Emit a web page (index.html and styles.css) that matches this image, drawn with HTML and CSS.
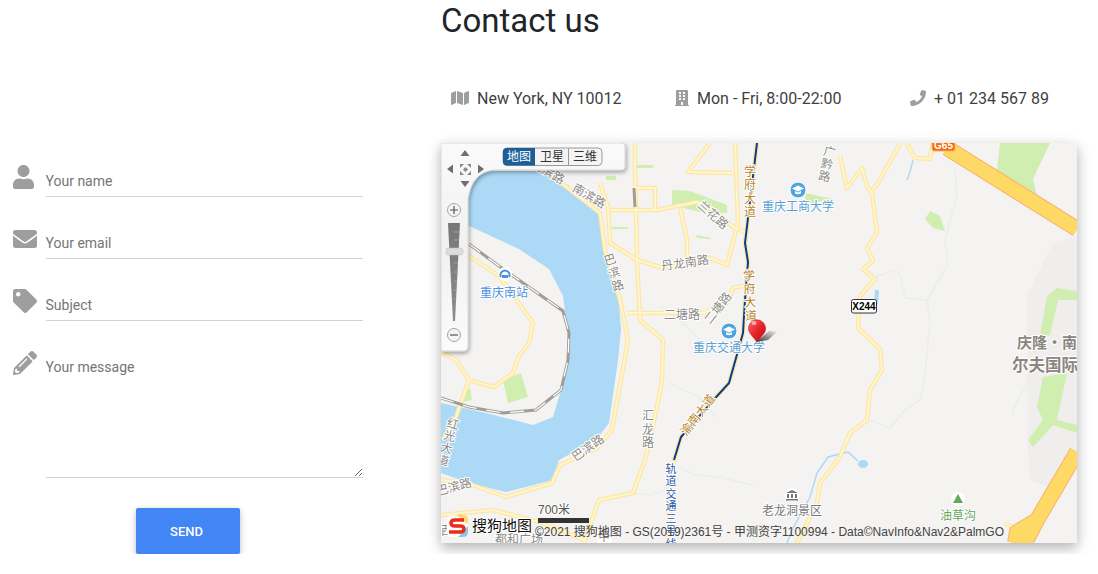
FILE: index.html
```html
<!DOCTYPE html>
<html lang="en">
<head>
    <meta charset="UTF-8">
    <meta name="viewport" content="width=device-width, initial-scale=1.0">
    <title>Contact us</title>
    <link rel="stylesheet" href="styles.css">
</head>
<body>
    <div class="page">
        <form class="contact-form">
            <div class="field">
                <svg class="field-icon" viewBox="0 0 448 512" preserveAspectRatio="xMinYMid"><path d="M224 256c70.7 0 128-57.3 128-128S294.7 0 224 0 96 57.3 96 128s57.3 128 128 128zm89.6 32h-16.7c-22.2 10.2-46.9 16-72.9 16s-50.6-5.8-72.9-16h-16.7C60.2 288 0 348.2 0 422.4V464c0 26.5 21.5 48 48 48h352c26.5 0 48-21.5 48-48v-41.6c0-74.2-60.2-134.4-134.4-134.4z"/></svg>
                <input type="text" placeholder="Your name">
            </div>
            <div class="field">
                <svg class="field-icon" viewBox="0 0 512 512"><path d="M502.3 190.8c3.9-3.1 9.7-.2 9.7 4.7V400c0 26.5-21.5 48-48 48H48c-26.5 0-48-21.5-48-48V195.6c0-5 5.7-7.8 9.7-4.7 22.4 17.4 52.1 39.5 154.1 113.6 21.1 15.4 56.7 47.8 92.2 47.6 35.7.3 72-32.8 92.3-47.6 102-74.1 131.6-96.3 154-113.7zM256 320c23.2.4 56.6-29.2 73.4-41.4 132.7-96.3 142.8-104.7 173.4-128.7 5.8-4.5 9.2-11.5 9.2-18.9v-19c0-26.5-21.5-48-48-48H48C21.5 64 0 85.5 0 112v19c0 7.4 3.4 14.3 9.2 18.9 30.6 23.9 40.7 32.4 173.4 128.7 16.8 12.2 50.2 41.8 73.4 41.4z"/></svg>
                <input type="email" placeholder="Your email">
            </div>
            <div class="field">
                <svg class="field-icon" viewBox="0 0 512 512"><path d="M0 252.118V48C0 21.49 21.49 0 48 0h204.118a48 48 0 0 1 33.941 14.059l211.882 211.882c18.745 18.745 18.745 49.137 0 67.882L293.823 497.941c-18.745 18.745-49.137 18.745-67.882 0L14.059 286.059A48 48 0 0 1 0 252.118zM112 64c-26.51 0-48 21.49-48 48s21.49 48 48 48 48-21.49 48-48-21.49-48-48-48z"/></svg>
                <input type="text" placeholder="Subject">
            </div>
            <div class="field field-message">
                <svg class="field-icon" viewBox="0 0 512 512"><path d="M497.9 142.1l-46.1 46.1c-4.7 4.7-12.3 4.7-17 0l-111-111c-4.7-4.7-4.7-12.3 0-17l46.1-46.1c18.7-18.7 49.1-18.7 67.9 0l60.1 60.1c18.8 18.7 18.8 49.1 0 67.9zM284.2 99.8L21.6 362.4.4 483.9c-2.9 16.4 11.4 30.6 27.8 27.8l121.5-21.3 262.6-262.6c4.7-4.7 4.7-12.3 0-17l-111-111c-4.8-4.7-12.4-4.7-17.1 0zM124.1 339.9c-5.5-5.5-5.5-14.3 0-19.8l154-154c5.5-5.5 14.3-5.5 19.8 0s5.5 14.3 0 19.8l-154 154c-5.5 5.5-14.3 5.5-19.8 0zM88 424h48v36.3l-64.5 11.3-31.1-31.1L51.7 376H88v48z"/></svg>
                <textarea placeholder="Your message"></textarea>
            </div>
            <button type="button" class="send-btn">SEND</button>
        </form>

        <section class="contact-info">
            <h2>Contact us</h2>
            <div class="info-row">
                <div class="info-item">
                    <svg class="info-icon" viewBox="0 0 576 512"><path d="M0 117.66v346.32c0 11.32 11.43 19.06 21.94 14.86L160 416V32L20.12 87.95A32.006 32.006 0 0 0 0 117.66zM192 416l192 64V96L192 32v384zM554.06 33.16L416 96v384l139.88-55.95A31.996 31.996 0 0 0 576 394.34V48.02c0-11.32-11.43-19.06-21.94-14.86z"/></svg>
                    <span>New York, NY 10012</span>
                </div>
                <div class="info-item">
                    <svg class="info-icon" viewBox="0 0 448 512"><path d="M436 480h-20V24c0-13.255-10.745-24-24-24H56C42.745 0 32 10.745 32 24v456H12c-6.627 0-12 5.373-12 12v20h448v-20c0-6.627-5.373-12-12-12zM128 76c0-6.627 5.373-12 12-12h40c6.627 0 12 5.373 12 12v40c0 6.627-5.373 12-12 12h-40c-6.627 0-12-5.373-12-12V76zm0 96c0-6.627 5.373-12 12-12h40c6.627 0 12 5.373 12 12v40c0 6.627-5.373 12-12 12h-40c-6.627 0-12-5.373-12-12v-40zm52 148h-40c-6.627 0-12-5.373-12-12v-40c0-6.627 5.373-12 12-12h40c6.627 0 12 5.373 12 12v40c0 6.627-5.373 12-12 12zm76 160h-64v-84c0-6.627 5.373-12 12-12h40c6.627 0 12 5.373 12 12v84zm64-172c0 6.627-5.373 12-12 12h-40c-6.627 0-12-5.373-12-12v-40c0-6.627 5.373-12 12-12h40c6.627 0 12 5.373 12 12v40zm0-96c0 6.627-5.373 12-12 12h-40c-6.627 0-12-5.373-12-12v-40c0-6.627 5.373-12 12-12h40c6.627 0 12 5.373 12 12v40zm0-96c0 6.627-5.373 12-12 12h-40c-6.627 0-12-5.373-12-12V76c0-6.627 5.373-12 12-12h40c6.627 0 12 5.373 12 12v40z"/></svg>
                    <span>Mon - Fri, 8:00-22:00</span>
                </div>
                <div class="info-item">
                    <svg class="info-icon" viewBox="0 0 512 512"><path d="M493.4 24.6l-104-24c-11.3-2.6-22.9 3.3-27.5 13.9l-48 112c-4.2 9.8-1.4 21.3 6.9 28l60.6 49.6c-36 76.7-98.9 140.5-177.2 177.2l-49.6-60.6c-6.8-8.3-18.2-11.1-28-6.9l-112 48C3.9 366.5-2 378.1.6 389.4l24 104C27.1 504.2 36.7 512 48 512c256.1 0 464-207.5 464-464 0-11.2-7.7-20.9-18.6-23.4z"/></svg>
                    <span>+ 01 234 567 89</span>
                </div>
            </div>

            <div class="map">
                <!-- viewBox uses page coordinates so the map features are easy to line up -->
                <svg class="map-canvas" viewBox="441 143 636 400">
                    <defs>
                        <linearGradient id="panelFill" x1="0" y1="0" x2="0" y2="1">
                            <stop offset="0" stop-color="#fafafa"/>
                            <stop offset="0.5" stop-color="#f1f1f1"/>
                            <stop offset="1" stop-color="#fbfbfb"/>
                        </linearGradient>
                        <linearGradient id="sliderFill" x1="0" y1="0" x2="0" y2="1">
                            <stop offset="0" stop-color="#777"/>
                            <stop offset="1" stop-color="#8b8b8b"/>
                        </linearGradient>
                        <linearGradient id="pinFill" x1="0" y1="0" x2="1" y2="1">
                            <stop offset="0" stop-color="#ff6a6a"/>
                            <stop offset="0.5" stop-color="#e8232b"/>
                            <stop offset="1" stop-color="#b30f1a"/>
                        </linearGradient>
                        <linearGradient id="pinShadow" x1="0" y1="1" x2="1" y2="0">
                            <stop offset="0" stop-color="#333"/>
                            <stop offset="1" stop-color="#333" stop-opacity="0"/>
                        </linearGradient>
                        <filter id="panelShadow" x="-20%" y="-20%" width="140%" height="140%">
                            <feDropShadow dx="1" dy="2" stdDeviation="2" flood-color="#000" flood-opacity="0.35"/>
                        </filter>
                        <g id="roadLines">
                            <path d="M635 143 L635 173 L636 207 L637 260 L640 320 L663 340 L662 380 L659 397 L646 457 L633 493 L599 500 L586 537 L584 543"/>
                            <path d="M600 183 L608 207 L610 243 L637 260 L663 268 L687 263 L710 258 L727 265 L738 223 L735 143"/>
                            <path d="M610 210 L657 210 L697 202 L710 207 L733 227 L747 233"/>
                            <path d="M680 208 L687 240 L687 265"/>
                            <path d="M710 143 L688 172 L733 173"/>
                            <path d="M633 188 L655 188 L655 210"/>
                            <path d="M627 313 L703 313 L727 303 L733 288 L748 285"/>
                            <path d="M546 171 L600 213 L605 250 L620 300 L628 340 L621 380 L612 430 L597 448 L560 465 L552 483 L506 497 L470 484 L441 480"/>
                            <path d="M469 256 L499 276 L533 323 L529 343 L519 356 L513 373 L494 387 L479 383 L469 380 L456 417 L443 440"/>
                            <path d="M441 352 L456 360 L469 380"/>
                            <path d="M840 156 L847 188 L862 168 L867 186 L872 193 L877 233 L867 248 L873 261 L863 269 L875 279 L860 296 L858 328 L880 349 L882 370 L870 390 L867 420 L850 433 L840 457 L820 483 L817 503 L797 543"/>
                            <path d="M872 191 L878 183 L897 149 L900 143"/>
                            <path d="M907 144 L915 158 L930 159 L933 143"/>
                            <path d="M441 515 L493 510 L543 523 L586 541"/>
                            <path d="M1005 523 L1017 530"/>
                            <path d="M757 143 L745 243 L748 262 L745 300 L743 333 L729 383 L718 395 L681 437 L674 460 L670 480 L668 543"/>
                        </g>
                    </defs>

                    <rect class="map-ground" x="441" y="143" width="636" height="400"/>

                    <!-- grey-pink area and parks -->
                    <path class="map-area" d="M1027 296 L1053 243 L1077 236 L1077 462 L1047 487 L1030 480 L1028 450 Z"/>
                    <path class="map-park" d="M1000 143 L1050 143 L1033 179 L1037 196 L997 171 Z"/>
                    <path class="map-park" d="M925 219 L930 211 L940 216 L945 231 L933 228 Z"/>
                    <path class="map-park" d="M1040 336 L1047 296 L1057 288 L1077 291 L1077 300 L1058 300 L1050 335 Z"/>
                    <path class="map-park" d="M1043 377 L1067 373 L1057 420 L1077 425 L1077 433 L1053 425 L1033 447 L1028 440 L1043 420 L1037 407 Z"/>
                    <path class="map-park" d="M672 190 L690 191 L727 205 L727 213 L700 212 L672 205 Z"/>
                    <path class="map-park" d="M503 380 L521 373 L528 397 L508 403 Z"/>
                    <path class="map-park" d="M462 392 L470 388 L472 400 L463 402 Z"/>
                    <path class="map-park" d="M635 165 L653 165 L653 168 L635 168 Z"/>
                    <path class="map-park" d="M696 235 L711 238 L710 239 L697 238 Z"/>
                    <path class="map-park" d="M612 227 L628 227 L628 229 L612 229 Z"/>
                    <path class="map-park" d="M606 176 L616 176 L616 180 L606 180 Z"/>
                    <path class="map-park" d="M805 193 L833 199 L806 204 Z"/>

                    <!-- water -->
                    <path class="map-water" d="M441 143 L494 171 L546 171 L569 186 L583 201 L601 214 L604 236 L606 259 L618 293 L621 329 L618 360 L609 423 L596 440 L559 460 L553 480 L506 492 L469 483 L441 473 L441 403 L486 413 L533 425 L553 417 L564 380 L568 360 L568 333 L563 296 L549 269 L519 249 L469 226 L441 215 Z"/>
                    <path class="map-stream" d="M913 160 L910 172 L907 180"/>
                    <path class="map-stream" d="M848 452 L828 457 L817 473 L810 497 L792 530 L787 543"/>
                    <path class="map-stream" d="M848 452 L858 461"/>
                    <ellipse class="map-water" cx="863" cy="464" rx="5" ry="4"/>
                    <path class="map-stream-wide" d="M877 290 L876 304"/>

                    <!-- thin paths -->
                    <path class="map-path" d="M955 170 L957 195 L945 240 L948 265 L927 300 L905 298 L900 275 L895 270 L875 277"/>
                    <path class="map-path" d="M927 300 L930 320 L925 376"/>
                    <path class="map-path" d="M870 420 L890 428 L905 410 L920 400 L925 376"/>
                    <path class="map-path" d="M1030 380 L1015 405 L1012 415"/>
                    <path class="map-path" d="M669 383 L699 397 L716 417"/>
                    <path class="map-path" d="M679 467 L695 475 L719 477 L753 485"/>
                    <path class="map-path" d="M633 493 L650 495 L668 490"/>
                    <path class="map-path" d="M660 305 L680 320 L700 340"/>

                    <!-- roads -->
                    <use href="#roadLines" class="road-casing"/>
                    <use href="#roadLines" class="road-fill"/>
                    <path class="rail-line" d="M757 143 L745 243 L748 262 L745 300 L743 333 L729 383 L718 395 L681 437 L674 460"/>

                    <path class="highway-casing" d="M947 148 L1077 229"/>
                    <path class="highway-casing" d="M1077 452 L1037 520 L1017 532 L1015 543"/>
                    <path class="highway-casing" d="M1037 520 L1025 543"/>
                    <path class="highway" d="M947 148 L1077 229"/>
                    <path class="highway" d="M1077 452 L1037 520 L1017 532 L1015 543"/>
                    <path class="highway" d="M1037 520 L1025 543"/>

                    <path class="rail-grey" d="M469 244 L499 266 L563 311 L569 333 L568 360 L561 390 L536 410 L503 413 L469 407 L441 398"/>
                    <path class="rail-dash" d="M469 244 L499 266 L563 311 L569 333 L568 360 L561 390 L536 410 L503 413 L469 407 L441 398"/>
                    <path class="rail-grey" d="M634 188 L635 207"/>

                    <!-- road names -->
                    <text class="lbl-road" x="548" y="176" text-anchor="middle" transform="rotate(30 548 172)">南滨路</text>
                    <text class="lbl-road" x="589" y="200" text-anchor="middle" transform="rotate(30 589 196)">南滨路</text>
                    <text class="lbl-road lbl-vertical" x="614" y="273" text-anchor="middle" transform="rotate(-17 614 273)">巴滨路</text>
                    <text class="lbl-road" x="713" y="219" text-anchor="middle" transform="rotate(42 713 215)">兰花路</text>
                    <text class="lbl-road" x="685" y="267" text-anchor="middle" transform="rotate(-8 685 263)">丹龙南路</text>
                    <text class="lbl-road" x="682" y="319" text-anchor="middle">二塘路</text>
                    <text class="lbl-road" x="718" y="312" text-anchor="middle" transform="rotate(-52 718 308)">二塘路</text>
                    <text class="lbl-road lbl-vertical lbl-tight" x="827" y="164" text-anchor="middle" transform="rotate(12 827 164)">广黔路</text>
                    <text class="lbl-road lbl-vertical" x="648" y="430" text-anchor="middle">汇龙路</text>
                    <text class="lbl-road" x="588" y="452" text-anchor="middle" transform="rotate(-35 588 448)">巴滨路</text>
                    <text class="lbl-road" x="454" y="491" text-anchor="middle" transform="rotate(-15 454 487)">巴滨路</text>
                    <text class="lbl-road lbl-vertical lbl-tight" x="448" y="442" text-anchor="middle" transform="rotate(15 448 442)">红光大道</text>
                    <text class="lbl-road" x="519" y="544" text-anchor="middle">都和广场</text>
                    <text class="lbl-road" x="447" y="535" text-anchor="middle">西</text>
                    <rect class="map-chip" x="597" y="530" width="15" height="13"/>
                    <text class="lbl-road" x="604" y="541" text-anchor="middle">甲</text>

                    <text class="lbl-trunk lbl-vertical" x="750" y="192" text-anchor="middle">学府大道</text>
                    <text class="lbl-trunk lbl-vertical" x="750" y="296" text-anchor="middle" transform="rotate(-3 750 296)">学府大道</text>
                    <text class="lbl-trunk" x="698" y="419" text-anchor="middle" transform="rotate(-52 698 415)">渝南大道</text>
                    <text class="lbl-rail lbl-vertical" x="671" y="507" text-anchor="middle">轨道交通三号线</text>

                    <!-- poi -->
                    <circle class="poi-halo" cx="505" cy="274" r="7"/>
                    <path class="poi-station" d="M501 277 A4.500 4.500 0 1 1 509 277"/>
                    <rect class="poi-station-bar" x="502" y="275" width="6" height="3"/>
                    <text class="lbl-station" x="504" y="297" text-anchor="middle">重庆南站</text>

                    <circle class="poi-school" cx="798" cy="190" r="8"/>
                    <path class="poi-cap" d="M798 185.500 L804 188.500 L798 191.500 L792 188.500 Z M795 191 L795 193.500 Q798 195 801 193.500 L801 191 L798 192.500 Z"/>
                    <text class="lbl-school" x="798" y="211" text-anchor="middle">重庆工商大学</text>

                    <circle class="poi-school" cx="729" cy="331" r="8"/>
                    <path class="poi-cap" d="M729 326.500 L735 329.500 L729 332.500 L723 329.500 Z M726 332 L726 334.500 Q729 336 732 334.500 L732 332 L729 333.500 Z"/>
                    <text class="lbl-school" x="729" y="352" text-anchor="middle">重庆交通大学</text>

                    <circle class="poi-halo" cx="792" cy="495" r="7"/>
                    <path class="poi-museum" d="M792 490 L798 493 L786 493 Z M787 494 H789 V498 H787 Z M791 494 H793 V498 H791 Z M795 494 H797 V498 H795 Z M786 499 H798 V500.500 H786 Z"/>
                    <text class="lbl-scenic" x="792" y="515" text-anchor="middle">老龙洞景区</text>

                    <circle class="poi-halo" cx="958" cy="499" r="7"/>
                    <path class="poi-hill" d="M958 494 L963 503 L953 503 Z"/>
                    <text class="lbl-hill" x="958" y="520" text-anchor="middle">油草沟</text>

                    <text class="lbl-place" x="1017" y="348">庆隆·南</text>
                    <text class="lbl-place lbl-place-big" x="1012" y="371">尔夫国际</text>

                    <!-- road shields -->
                    <rect class="shield-county" x="851.500" y="299.500" width="25" height="13.500" rx="2"/>
                    <text class="shield-county-text" x="864" y="310" text-anchor="middle">X244</text>
                    <rect class="shield-national" x="932" y="136" width="23" height="15" rx="2"/>
                    <text class="shield-national-text" x="943.500" y="149" text-anchor="middle">G65</text>

                    <!-- location pin -->
                    <path d="M756 342 L769 331 L778 331 L768 340 Z" fill="url(#pinShadow)"/>
                    <path class="map-pin" d="M757 342 L750.500 334 A8.600 8.600 0 1 1 764 333.500 Z" fill="url(#pinFill)"/>
                    <ellipse cx="754" cy="323" rx="2.500" ry="2" fill="#fff" opacity="0.55"/>

                    <!-- scale and logo -->
                    <text class="lbl-scale" x="538" y="514">700米</text>
                    <rect class="scale-bar" x="538" y="518" width="51" height="5"/>
                    <rect class="logo-box" x="447" y="515" width="21" height="22" rx="5"/>
                    <path class="logo-yellow" d="M456 515 H463 Q468 515 468 520 V524 Z"/>
                    <path class="logo-blue" d="M468 526 V532 Q468 537 463 537 H458 Z"/>
                    <path class="logo-s" d="M464 520 H455 Q451 520 451 523 Q451 526 455 526 H460 Q464 526 464 529 Q464 532 460 532 H449"/>
                    <text class="logo-text" x="472" y="531">搜狗地图</text>
                    <text class="map-copy" x="535" y="536">©2021 搜狗地图 - GS(2019)2361号 - 甲测资字1100994 - Data©NavInfo&amp;Nav2&amp;PalmGO</text>

                    <!-- navigation panel -->
                    <path class="nav-panel" d="M441 143 H622 Q625 143 625 146 V167 Q625 170 622 170 H494 Q472 172 468 199 V346 Q468 351 463 351 H441 Z" fill="url(#panelFill)"/>
                    <path class="nav-arrow" d="M465 150 L469.500 156 H460.500 Z M465 187 L460.500 181 H469.500 Z M447 169 L453 164.500 V173.500 Z M484 169 L478 164.500 V173.500 Z"/>
                    <path class="nav-arrow-small" d="M460 164 L464 164 L460 168 Z M471 164 L467 164 L471 168 Z M460 175 L460 171 L464 175 Z M471 175 L467 175 L471 171 Z M465.500 167 L468 169.500 L465.500 172 L463 169.500 Z"/>

                    <rect class="tab-group" x="503" y="148" width="99" height="17.500" rx="4"/>
                    <path class="tab-active" d="M507 148 H535 V165.500 H507 Q503 165.500 503 161.500 V152 Q503 148 507 148 Z"/>
                    <path class="tab-divider" d="M568.500 148.500 V165"/>
                    <text class="tab-label tab-label-on" x="519" y="161" text-anchor="middle">地图</text>
                    <text class="tab-label" x="552" y="161" text-anchor="middle">卫星</text>
                    <text class="tab-label" x="585" y="161" text-anchor="middle">三维</text>

                    <circle class="zoom-btn" cx="454" cy="210" r="6.500"/>
                    <path class="zoom-sign" d="M450 210 H458 M454 206 V214"/>
                    <path d="M448 223 H460 L455 321 H453 Z" fill="url(#sliderFill)"/>
                    <path class="slider-ticks" d="M454 232 H460 M454 240 H459 M454 263 H458 M454 272 H458 M454 281 H457 M454 290 H457 M454 299 H456 M454 308 H456"/>
                    <rect class="slider-thumb" x="446" y="248" width="17" height="7" rx="2.500"/>
                    <circle class="zoom-btn" cx="454" cy="335" r="6.500"/>
                    <path class="zoom-sign" d="M450 335 H458"/>
                </svg>
            </div>
        </section>
    </div>
</body>
</html>
```

FILE: styles.css
```css
* {
    box-sizing: border-box;
}
body {
    margin: 0;
    font-family: Roboto, "Liberation Sans", sans-serif;
    background-color: #fff;
    color: #212529;
    overflow: hidden;
}
.page {
    display: flex;
}

/* form */
.contact-form {
    width: 441px;
    padding: 165px 78px 0 13px;
    display: flex;
    flex-direction: column;
}
.field {
    display: flex;
    align-items: flex-start;
    margin-bottom: 30px;
}
.field-icon {
    flex: 0 0 24px;
    width: 24px;
    height: 24px;
    margin-right: 8.5px;
    fill: #9e9e9e;
}
.field input,
.field textarea {
    flex: 1;
    min-width: 0;
    font-family: Roboto, sans-serif;
    font-size: 14px;
    border: none;
    border-bottom: 1px solid #ced4da;
    outline: none;
    padding: 0;
    background: transparent;
    color: #495057;
}
.field input {
    height: 32px;
}
.field textarea {
    height: 127px;
    padding-top: 8px;
    display: block;
}
input::placeholder,
textarea::placeholder {
    color: #757575;
    opacity: 1;
}
.send-btn {
    align-self: center;
    width: 104px;
    height: 46px;
    padding: 0 3px 0 0;
    border: none;
    border-radius: 2px;
    background: #4285f4;
    color: #fff;
    font-family: Roboto, sans-serif;
    font-size: 13px;
    font-weight: 500;
    box-shadow: 0 2px 5px rgba(0, 0, 0, 0.16), 0 2px 10px rgba(0, 0, 0, 0.12);
}

/* right column */
.contact-info {
    width: 636px;
}
h2 {
    margin: 2px 0 0;
    font-size: 33px;
    font-weight: 400;
    line-height: 38px;
    color: #212529;
}
.info-row {
    display: grid;
    grid-template-columns: 224px 235px 1fr;
    padding-left: 10px;
    margin-top: 49px;
    height: 54px;
}
.info-item {
    display: flex;
    align-items: flex-start;
    gap: 8px;
    font-size: 16px;
    line-height: 19px;
    color: #3f3f3f;
}
.info-icon {
    height: 16px;
    width: auto;
    margin-top: 1px;
    fill: #9e9e9e;
}
.map {
    width: 636px;
    height: 400px;
    box-shadow: 0 5px 11px rgba(0, 0, 0, 0.18), 0 4px 15px rgba(0, 0, 0, 0.15);
}
.map-canvas {
    display: block;
    width: 636px;
    height: 400px;
    font-family: "Noto Sans CJK SC", sans-serif;
}

/* map layers */
.map-ground { fill: #f4f3f1; }
.map-area { fill: #f0eded; }
.map-park { fill: #cfeeb0; }
.map-water { fill: #abd9f6; }
.map-stream { fill: none; stroke: #abd9f6; stroke-width: 1.5; }
.map-stream-wide { fill: none; stroke: #abd9f6; stroke-width: 4; }
.map-path { fill: none; stroke: #e9eeea; stroke-width: 1.5; }
.road-casing { fill: none; stroke: #fce7a4; stroke-width: 4.5; stroke-linejoin: round; }
.road-fill { fill: none; stroke: #fff5d0; stroke-width: 2; stroke-linejoin: round; }
.rail-line { fill: none; stroke: #0a3a8c; stroke-width: 2; stroke-linejoin: round; }
.rail-grey { fill: none; stroke: #a09c98; stroke-width: 3; }
.rail-dash { fill: none; stroke: #fff; stroke-width: 1.2; stroke-dasharray: 14 10; }
.highway-casing { fill: none; stroke: #f7b36c; stroke-width: 16; stroke-linejoin: round; }
.highway { fill: none; stroke: #ffd966; stroke-width: 14; stroke-linejoin: round; }
.map-chip { fill: #fff; }

/* map text */
.lbl-road,
.lbl-trunk,
.lbl-rail,
.lbl-station,
.lbl-school,
.lbl-scenic,
.lbl-hill,
.lbl-place,
.lbl-scale,
.logo-text {
    paint-order: stroke;
    stroke: #fff;
    stroke-width: 2px;
    stroke-linejoin: round;
}
.lbl-vertical { writing-mode: vertical-rl; letter-spacing: 1.5px; }
.lbl-tight { letter-spacing: 0.5px; }
.lbl-road { font-size: 12px; fill: #8c8a86; }
.lbl-trunk { font-size: 12px; fill: #b8862b; }
.lbl-rail { font-size: 11px; fill: #2a5aa8; }
.lbl-station { font-size: 12px; fill: #4f8fe0; }
.lbl-school { font-size: 12px; fill: #5a9fd4; }
.lbl-scenic { font-size: 12px; fill: #77757c; }
.lbl-hill { font-size: 12px; fill: #64a85a; }
.lbl-place { font-size: 15px; font-weight: 700; fill: #8a857e; }
.lbl-place-big { font-size: 16.5px; }
.lbl-scale { font-size: 12px; fill: #555; font-family: "Liberation Sans", "Noto Sans CJK SC", sans-serif; }
.scale-bar { fill: #333; }
.logo-text { font-size: 15px; fill: #111; }
.map-copy { font-size: 12px; fill: #444; font-family: "Liberation Sans", "Noto Sans CJK SC", sans-serif; }
.logo-box { fill: #fff; }
.logo-yellow { fill: #ffd76a; }
.logo-blue { fill: #8cc6ec; }
.logo-s { fill: none; stroke: #ee2a1c; stroke-width: 3.5; }

/* points of interest */
.poi-halo { fill: #fff; }
.poi-station { fill: none; stroke: #4f8fe0; stroke-width: 2; }
.poi-station-bar { fill: #4f8fe0; }
.poi-school { fill: #4fa3e0; stroke: #fff; stroke-width: 1; }
.poi-cap { fill: #fff; }
.poi-museum { fill: #77757c; }
.poi-hill { fill: #64a85a; }
.shield-county { fill: #fff; stroke: #333; stroke-width: 1; }
.shield-county-text { font-size: 10px; font-weight: 700; fill: #000; font-family: "Liberation Sans", sans-serif; }
.shield-national { fill: #f46a0a; stroke: #ffb070; stroke-width: 1; }
.shield-national-text { font-size: 10px; font-weight: 700; fill: #fff; font-family: "Liberation Sans", sans-serif; }
.map-pin { stroke: #c2161f; stroke-width: 0.5; }

/* map controls */
.nav-panel { stroke: #d6d6d6; stroke-width: 1; filter: url(#panelShadow); }
.nav-arrow { fill: #6f6f6f; }
.nav-arrow-small { fill: #8a8a8a; }
.tab-group { fill: #f4f4f4; stroke: #9a9a9a; stroke-width: 1; }
.tab-active { fill: #1b5f98; }
.tab-divider { stroke: #9a9a9a; stroke-width: 1; }
.tab-label { font-size: 12px; fill: #333; }
.tab-label-on { fill: #fff; }
.zoom-btn { fill: #f4f4f4; stroke: #a5a5a5; stroke-width: 1; }
.zoom-sign { fill: none; stroke: #555; stroke-width: 1.2; }
.slider-ticks { stroke: #aaa; stroke-width: 0.8; }
.slider-thumb { fill: #dcdcdc; stroke: #bdbdbd; stroke-width: 0.5; }
```
